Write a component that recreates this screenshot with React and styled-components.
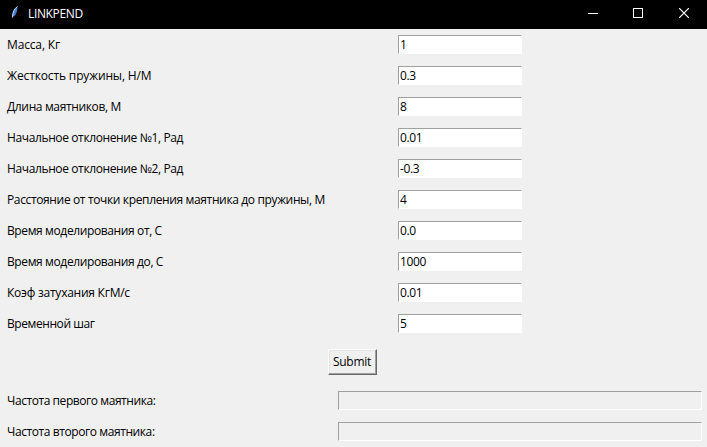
import React from "react";
import styled, { createGlobalStyle } from "styled-components";

const GlobalStyle = createGlobalStyle`
  * { box-sizing: border-box; }
  body { margin: 0; background: #f0f0f0; overflow: hidden; }
`;

const Window = styled.div`
  width: 707px;
  height: 447px;
  display: flex;
  flex-direction: column;
  background: #f0f0f0;
  color: #000;
  font: 12px/19px "Open Sans", "Noto Sans", sans-serif;
  white-space: nowrap;
  overflow: hidden;
`;

const TitleBar = styled.header`
  height: 29px;
  flex: none;
  display: flex;
  align-items: center;
  padding-left: 9px;
  background: #000;
  color: #fff;
`;

const Feather = styled.svg`
  width: 12px;
  height: 18px;
  margin: 0 7px 4px 0;
`;

const Title = styled.h1`
  flex: 1;
  margin: 0 0 2px;
  font-size: 12px;
  font-weight: 400;
  letter-spacing: -0.35px;
`;

const Controls = styled.div`
  display: flex;
`;

const Control = styled.button`
  width: 46px;
  height: 29px;
  flex: none;
  padding: 0 0 3px;
  display: flex;
  align-items: center;
  justify-content: center;
  border: 0;
  background: none;
  color: #fff;
`;

const Row = styled.div`
  height: 31px;
  flex: none;
  display: flex;
  align-items: center;
  padding: 0 5px 0 7px;
`;

const Label = styled.label`
  width: ${(p) => p.$width}px;
  flex: none;
  letter-spacing: ${(p) => p.$tracking}px;
`;

const Entry = styled.input`
  width: 124px;
  height: 19px;
  margin: 0;
  padding: 0 0 0 1px;
  border: 1px solid;
  border-color: #a0a0a0 #fff #fff #a0a0a0;
  border-radius: 0;
  outline: 0;
  background: #fff;
  color: #000;
  font: inherit;
  letter-spacing: -0.4px;
`;

const ResultEntry = styled(Entry)`
  width: 364px;
  background: #f0f0f0;
`;

const Actions = styled.div`
  height: 46px;
  flex: none;
  display: flex;
  align-items: center;
  padding-left: 328px;
`;

const SubmitButton = styled.button`
  width: 49px;
  height: 26px;
  padding: 0 1px 0 0;
  border: 1px solid;
  border-color: #fff #696969 #696969 #fff;
  box-shadow: inset -1px -1px #a0a0a0, inset 1px 1px #e3e3e3;
  background: #f0f0f0;
  color: #000;
  font: inherit;
  line-height: 22px;
  letter-spacing: -0.25px;
`;

const fields = [
  ["Масса, Кг", "1", -0.15],
  ["Жесткость пружины, Н/М", "0.3", -0.14],
  ["Длина маятников, М", "8", -0.36],
  ["Начальное отклонение №1, Рад", "0.01", -0.38],
  ["Начальное отклонение №2, Рад", "-0.3", -0.38],
  ["Расстояние от точки крепления маятника до пружины, М", "4", -0.36],
  ["Время моделирования от, С", "0.0", -0.38],
  ["Время моделирования до, С", "1000", -0.38],
  ["Коэф затухания КгМ/с", "0.01", -0.24],
  ["Временной шаг", "5", -0.42],
];

const results = [
  ["Частота первого маятника:", -0.43],
  ["Частота второго маятника:", -0.41],
];

export default function App() {
  return (
    <Window>
      <GlobalStyle />
      <TitleBar>
        <Feather viewBox="0 0 12 18">
          <path d="M8.5 2.5C6 4 3.5 8 3.5 12L5 12.5C7.5 10 8.5 6 8.5 2.5Z" fill="#3f82d0" />
          <path d="M8.5 2.5C5.5 4.500 3.500 8 3.500 13.500" fill="none" stroke="#c9e2f7" />
        </Feather>
        <Title>LINKPEND</Title>
        <Controls>
          <Control aria-label="Minimize">
            <svg width="12" height="10" shapeRendering="crispEdges"><path d="M2 5.500H12" stroke="currentColor" /></svg>
          </Control>
          <Control aria-label="Maximize">
            <svg width="10" height="10" shapeRendering="crispEdges"><path d="M.5.5H9.500V9.500H.5Z" fill="none" stroke="currentColor" /></svg>
          </Control>
          <Control aria-label="Close">
            <svg width="10" height="10"><path d="M0 0L10 10M10 0L0 10" stroke="currentColor" strokeWidth="1.200" /></svg>
          </Control>
        </Controls>
      </TitleBar>
      {fields.map(([label, value, tracking]) => (
        <Row key={label}>
          <Label $width={391} $tracking={tracking}>{label}</Label>
          <Entry defaultValue={value} aria-label={label} />
        </Row>
      ))}
      <Actions>
        <SubmitButton>Submit</SubmitButton>
      </Actions>
      {results.map(([label, tracking]) => (
        <Row key={label}>
          <Label $width={331} $tracking={tracking}>{label}</Label>
          <ResultEntry readOnly aria-label={label} />
        </Row>
      ))}
    </Window>
  );
}
